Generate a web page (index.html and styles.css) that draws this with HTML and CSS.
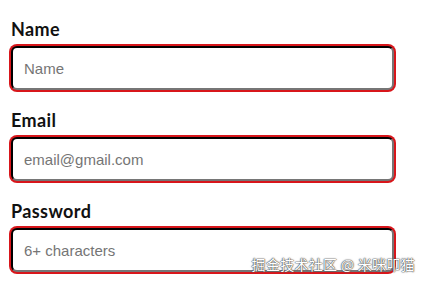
FILE: index.html
```html
<!DOCTYPE html>
<html>
	<head>
		<meta charset="utf-8">
		<title>表单</title>
		<link rel="stylesheet" href="styles.css">
	</head>
	<body>
		<form class="form">
			<div class="field">
				<label for="name">Name</label>
				<input id="name" type="text" placeholder="Name">
			</div>
			<div class="field">
				<label for="email">Email</label>
				<input id="email" type="email" placeholder="email@gmail.com">
			</div>
			<div class="field">
				<label for="pwd">Password</label>
				<input id="pwd" type="password" placeholder="6+ characters">
			</div>
		</form>
		<div class="mark">掘金技术社区 @ 米咪叩猫</div>
	</body>
</html>
```

FILE: styles.css
```css
* {
	margin: 0;
	padding: 0;
	box-sizing: border-box;
}
body {
	background: #fff;
	font-family: "Liberation Sans", Arial, sans-serif;
	position: relative;
	width: 425px;
	height: 283px;
	overflow: hidden;
}
.form {
	padding: 19px 0 0 11px;
}
.field {
	margin-bottom: 20px;
}
.field label {
	display: block;
	font-family: Lato, "Noto Sans", sans-serif;
	font-weight: 700;
	font-size: 18px;
	letter-spacing: 0.4px;
	line-height: 20px;
	color: #111;
	margin-bottom: 7px;
}
.field input {
	display: block;
	width: 383px;
	height: 44px;
	padding: 1px 11px 0;
	font-family: "Liberation Sans", Arial, sans-serif;
	font-size: 15px;
	color: #333;
	border: 2px inset #767676;
	border-top-color: #3a0c0c;
	border-left-color: #3a0c0c;
	border-radius: 6px;
	box-shadow: 0 0 0 2px #d8161b;
	outline: none;
}
.field input::placeholder {
	color: #757575;
}
.mark {
	position: absolute;
	right: 10px;
	bottom: 9px;
	font-family: "Noto Sans CJK SC", sans-serif;
	font-size: 14px;
	letter-spacing: 0.3px;
	color: #fff;
	text-shadow: 0 0 1px #444, 0 0 1px #444, 0 0 2px #666;
}
```
